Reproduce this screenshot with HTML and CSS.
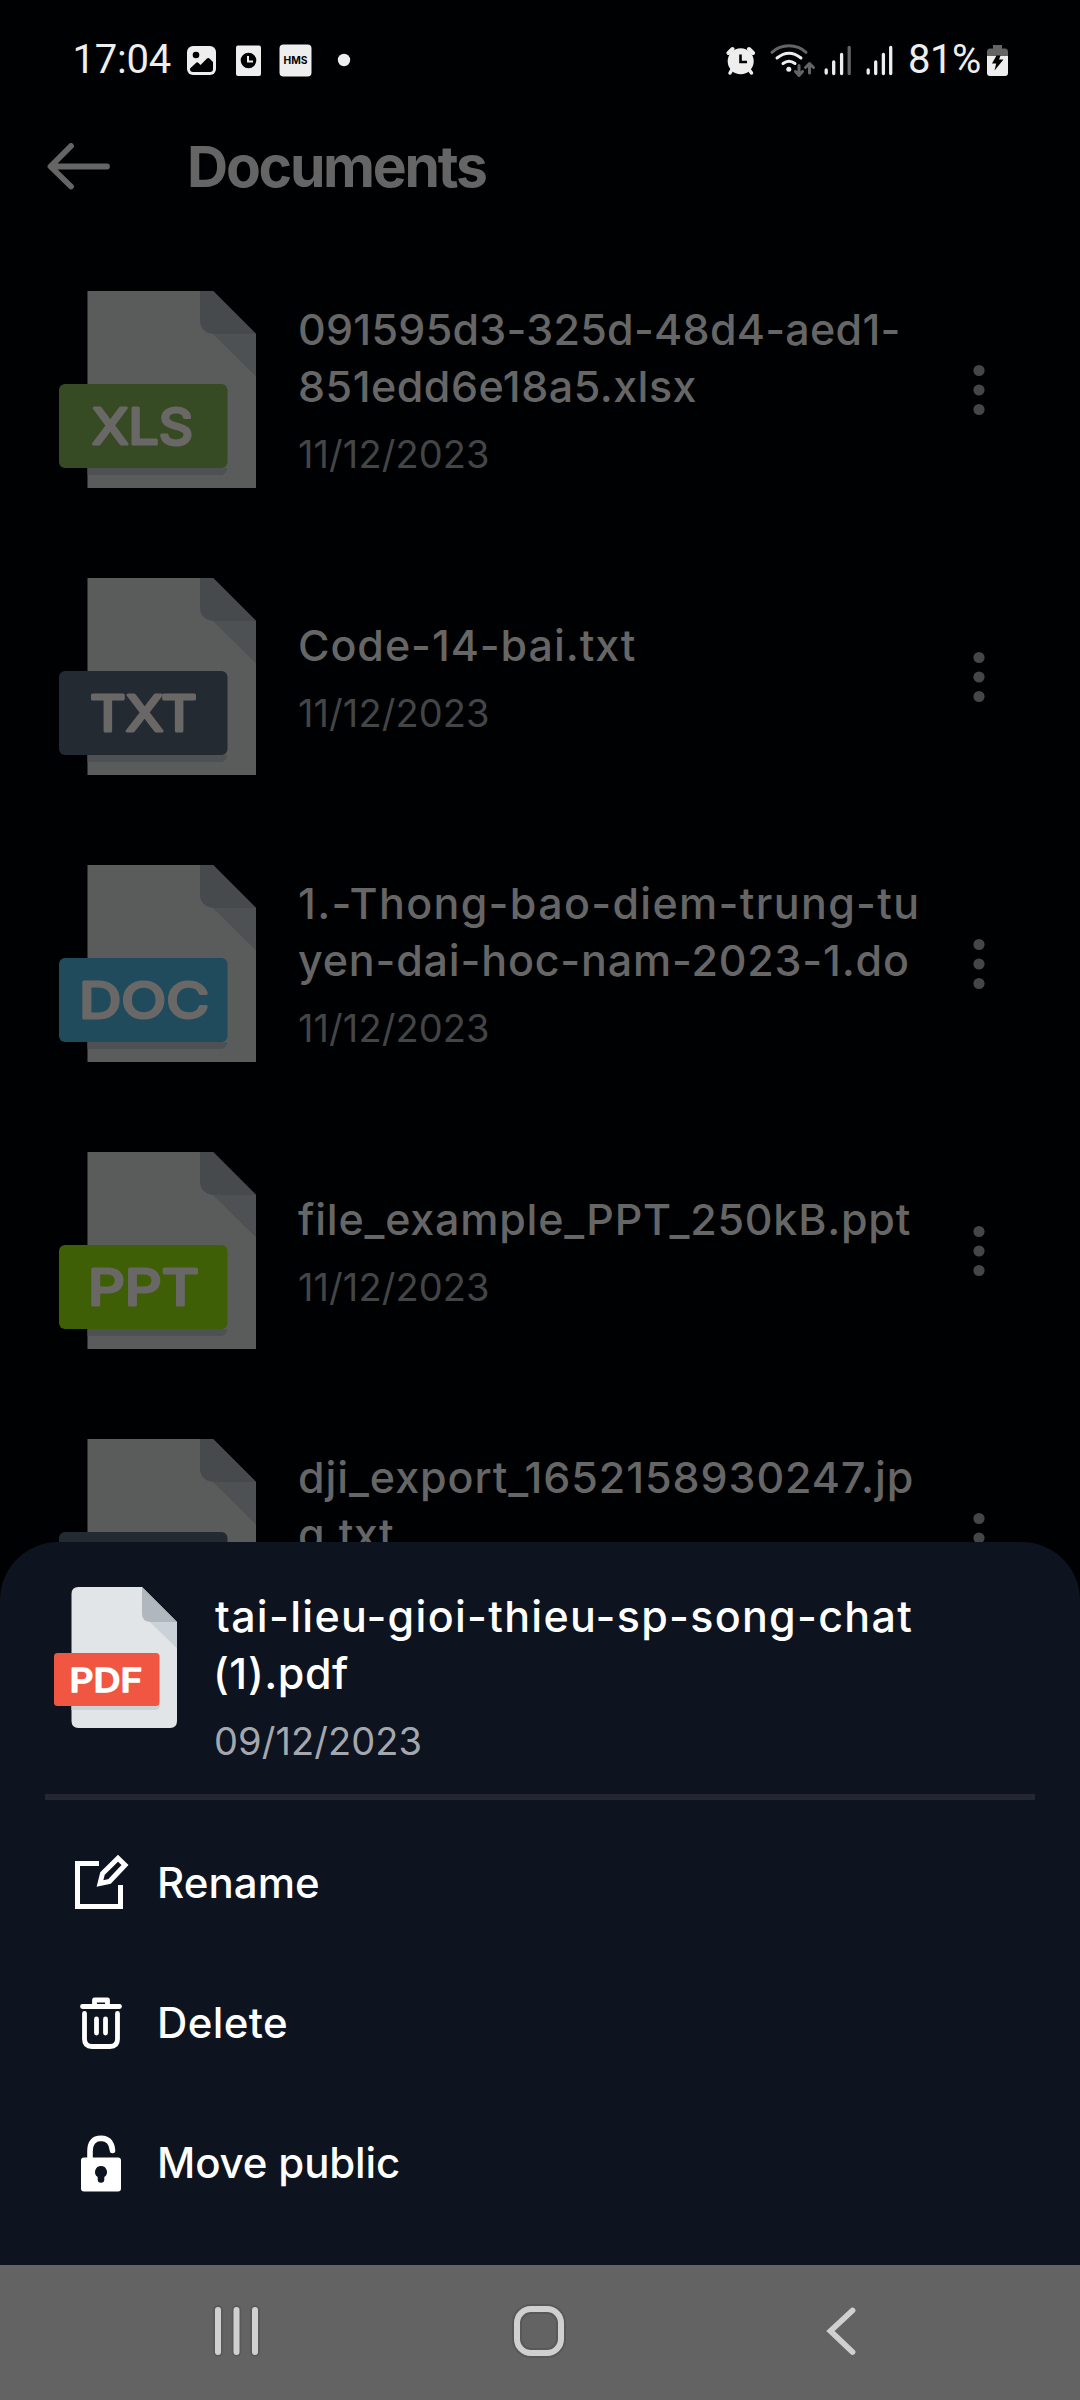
FILE: index.html
```html
<!DOCTYPE html>
<html lang="en">
<head>
<meta charset="utf-8">
<title>Documents</title>
<link rel="stylesheet" href="styles.css">
</head>
<body>
<svg class="defs" width="0" height="0" aria-hidden="true">
  <symbol id="sheet-dim" viewBox="0 0 198 198">
    <path fill="#5a5c5b" d="M28.500 0H154L197 43V197H28.500Z"/>
    <path fill="#4d5154" d="M154 43H197V85.500Z"/>
    <path fill="#464a4d" d="M141 0H154L197 43H154Q141 41 141 29Z"/>
    <path fill="#4d5154" d="M28.500 177H168V178Q167 184 161 184H28.500Z"/>
  </symbol>
  <symbol id="dots" viewBox="0 0 12 52">
    <g fill="#454647"><circle cx="6" cy="6.500" r="5.600"/><circle cx="6" cy="26" r="5.600"/><circle cx="6" cy="45.500" r="5.600"/></g>
  </symbol>
</svg>

<div class="screen">
  <header class="status">
    <span class="clock">17:04</span>
    <svg class="status-left" width="166" height="36" viewBox="0 0 166 36">
      <rect x="0" y="4" width="29" height="29" rx="6" fill="#eee"/>
      <circle cx="9" cy="13" r="3.300" fill="#000102"/>
      <path fill="#000102" d="M3 26.500L9.500 20.500Q10.500 20 11.500 21L13.500 23L20 16.500Q21.500 15.500 23 17L26 20V27Q26 30 23 30H6Q3 30 3 27Z"/>
      <rect x="49" y="3.500" width="25" height="30.500" rx="2" fill="#eee"/>
      <circle cx="61.500" cy="18.500" r="7.800" fill="#000102"/>
      <path d="M61 14V19.500H66" fill="none" stroke="#eee" stroke-width="2"/>
      <rect x="92.500" y="2.500" width="32" height="32" rx="4" fill="#eee"/>
      <text class="hms" x="96.500" y="22.200" textLength="24" lengthAdjust="spacingAndGlyphs">HMS</text>
      <circle cx="157" cy="18" r="6.200" fill="#eee"/>
    </svg>
    <svg class="status-right" width="129" height="36" viewBox="0 0 129 36">
      <g fill="none" stroke="#eee" stroke-linecap="round">
        <path stroke-width="4" d="M2.500 11L6.500 7M27 11L23 7"/>
        <path stroke-width="3.500" d="M6 27.500L4 31M23 27.500L25.500 31"/>
      </g>
      <circle cx="14.700" cy="19.300" r="13" fill="#eee"/>
      <path d="M14.500 12.500V20H21" fill="none" stroke="#000102" stroke-width="2.600"/>
      <g fill="none" stroke-width="3" stroke-linecap="round">
        <path stroke="#646464" d="M46 10.300Q53 3.800 63 3.800T80 10.300"/>
        <path stroke="#eee" d="M51 16Q63 6.500 75 16M57 21.500Q63 17 69 21.500"/>
      </g>
      <circle cx="62.800" cy="27.300" r="2.500" fill="#eee"/>
      <path d="M73 23.500V33M69.500 29.500L73 33.500L76.500 29.500M83.500 31V21.500M79.500 25.500L83.500 21.500L87.500 25.500" fill="none" stroke="#646464" stroke-width="3" stroke-linecap="round" stroke-linejoin="round"/>
      <g stroke="#eee" stroke-width="3.300" stroke-linecap="round">
        <path d="M100.200 28V31M107.700 20V31.500M115.600 12.500V31.500"/>
        <path stroke="#646464" d="M123.200 5.500V31.500"/>
      </g>
    </svg>
    <svg class="signal" width="28" height="36" viewBox="0 0 28 36">
      <path d="M2.200 28V31M9.700 20V31.500M17.400 12.500V31.500M24.700 5.500V31.500" stroke="#eee" stroke-width="3.300" stroke-linecap="round"/>
    </svg>
    <span class="percent">81%</span>
    <svg class="battery" width="21" height="36" viewBox="0 0 21 36">
      <path fill="#646464" d="M6 3H15V6.500H18Q21 6.500 21 10V16H0V10Q0 6.500 3 6.500H6Z"/>
      <path fill="#eee" d="M0 14H21V31Q21 34 18 34H3Q0 34 0 31Z"/>
      <path fill="#000102" d="M9.500 13.500H13.500L12 17.500H16.500L7.500 28.500L9.200 21.500H5Z"/>
    </svg>
  </header>

  <div class="appbar">
    <svg width="64" height="48" viewBox="0 0 64 48"><path d="M61 23.500H5M25 3L4.500 23.500L25 43.500" fill="none" stroke="#656565" stroke-width="5.800" stroke-linecap="round" stroke-linejoin="round"/></svg>
    <h1>Documents</h1>
  </div>

  <main class="list">
    <div class="row">
      <svg class="thumb" width="198" height="198" viewBox="0 0 198 198"><use href="#sheet-dim"/><rect y="93" width="168.500" height="84" rx="6" fill="#364b24"/><text class="tag" x="33" y="153" textLength="101" lengthAdjust="spacingAndGlyphs">XLS</text></svg>
      <div class="info"><div class="name ls-a">091595d3-325d-48d4-aed1-</div><div class="name ls-b">851edd6e18a5.xlsx</div><div class="date">11/12/2023</div></div>
      <svg class="more" width="12" height="52"><use href="#dots"/></svg>
    </div>
    <div class="row">
      <svg class="thumb" width="198" height="198" viewBox="0 0 198 198"><use href="#sheet-dim"/><rect y="93" width="168.500" height="84" rx="6" fill="#242a32"/><text class="tag" x="31" y="153" textLength="107" lengthAdjust="spacingAndGlyphs">TXT</text></svg>
      <div class="info"><div class="name ls-c">Code-14-bai.txt</div><div class="date">11/12/2023</div></div>
      <svg class="more" width="12" height="52"><use href="#dots"/></svg>
    </div>
    <div class="row">
      <svg class="thumb" width="198" height="198" viewBox="0 0 198 198"><use href="#sheet-dim"/><rect y="93" width="168.500" height="84" rx="6" fill="#204b5d"/><text class="tag" x="20" y="153" textLength="130" lengthAdjust="spacingAndGlyphs">DOC</text></svg>
      <div class="info"><div class="name ls-d">1.-Thong-bao-diem-trung-tu</div><div class="name ls-e">yen-dai-hoc-nam-2023-1.do</div><div class="date">11/12/2023</div></div>
      <svg class="more" width="12" height="52"><use href="#dots"/></svg>
    </div>
    <div class="row">
      <svg class="thumb" width="198" height="198" viewBox="0 0 198 198"><use href="#sheet-dim"/><rect y="93" width="168.500" height="84" rx="6" fill="#3e5f05"/><text class="tag" x="29" y="153" textLength="111" lengthAdjust="spacingAndGlyphs">PPT</text></svg>
      <div class="info"><div class="name ls-f">file_example_PPT_250kB.ppt</div><div class="date">11/12/2023</div></div>
      <svg class="more" width="12" height="52"><use href="#dots"/></svg>
    </div>
    <div class="row">
      <svg class="thumb" width="198" height="198" viewBox="0 0 198 198"><use href="#sheet-dim"/><rect y="93" width="168.500" height="84" rx="6" fill="#242a32"/></svg>
      <div class="info"><div class="name ls-g">dji_export_1652158930247.jp</div><div class="name ls-b">g.txt</div><div class="date"></div></div>
      <svg class="more" width="12" height="52"><use href="#dots"/></svg>
    </div>
  </main>

  <section class="sheet">
    <div class="file">
      <svg class="pdf" width="124" height="142" viewBox="0 0 124 142">
        <path fill="#e2e5e7" d="M24.500 0H88L123 35V134Q123 141 116 141H24.500Q17.500 141 17.500 134V7Q17.500 0 24.500 0Z"/>
        <path fill="#cad1d8" d="M96 35H123V61.500Z"/>
        <path fill="#b0b7bd" d="M88 0L123 35H96Q88 34 88 27Z"/>
        <path fill="#cad1d8" d="M17.500 119H106Q105 123 101 123H17.500Z"/>
        <rect y="66" width="105.500" height="53" rx="3.500" fill="#f15642"/>
        <text class="pdf-tag" x="15.500" y="105" textLength="73" lengthAdjust="spacingAndGlyphs">PDF</text>
      </svg>
      <div class="info"><div class="name ls-h">tai-lieu-gioi-thieu-sp-song-chat</div><div class="name ls-b par">(1).pdf</div><div class="date">09/12/2023</div></div>
    </div>
    <hr>
    <ul class="menu">
      <li>
        <svg width="56" height="60" viewBox="0 0 56 60"><path d="M24 9.500H2.500V52.500H45.500V31M27.500 19.500L43 4.300L50 11L34.500 27.500L25 29.500Z" fill="none" stroke="#fff" stroke-width="5"/></svg>
        <span class="ls-i">Rename</span>
      </li>
      <li>
        <svg width="56" height="60" viewBox="0 0 56 60"><g transform="translate(0 1)" fill="none" stroke="#fff" stroke-width="4.800" stroke-linecap="round" stroke-linejoin="round"><path d="M7.500 11.500H44.500M19.500 11V5H32.500V11M9.500 18.500V44Q9.500 51.500 17 51.500H35Q42.500 51.500 42.500 44V18.500"/><path d="M21.500 24V38M30.500 24V38"/></g></svg>
        <span class="ls-j">Delete</span>
      </li>
      <li>
        <svg width="56" height="60" viewBox="0 0 56 60"><g transform="translate(0 1.500)"><path d="M15 26V16Q15 3 26 2.800Q36.500 3 37.500 15" fill="none" stroke="#fff" stroke-width="5.600" stroke-linecap="round"/><path fill="#fff" fill-rule="evenodd" d="M9 22H43Q46 22 46 25V53Q46 56 43 56H9Q6 56 6 53V25Q6 22 9 22ZM26 30.500A6 6 0 0 0 22.700 41.500V44A3.300 3.300 0 0 0 29.300 44V41.500A6 6 0 0 0 26 30.500Z"/></g></svg>
        <span class="ls-k">Move public</span>
      </li>
    </ul>
  </section>

  <nav class="nav">
    <svg width="50" height="56" viewBox="0 0 50 56"><path d="M6 7V49M24.500 7V49M43 7V49" stroke="#585858" stroke-width="9.500" stroke-linecap="round"/><path d="M6 7V49M24.500 7V49M43 7V49" stroke="#d0d0d0" stroke-width="6" stroke-linecap="round"/></svg>
    <svg width="56" height="56" viewBox="0 0 56 56"><rect x="6" y="6" width="44" height="44" rx="14" fill="none" stroke="#585858" stroke-width="10"/><rect x="6" y="6" width="44" height="44" rx="14" fill="none" stroke="#d0d0d0" stroke-width="6"/></svg>
    <svg width="34" height="56" viewBox="0 0 34 56"><path d="M27.500 7.500L5.500 28L27.500 49" fill="none" stroke="#d0d0d0" stroke-width="5.800" stroke-linecap="round" stroke-linejoin="miter"/></svg>
  </nav>
</div>
</body>
</html>
```
FILE: styles.css
```css
* { box-sizing: border-box; }
body { margin: 0; background: #000102; font-family: Inter, "Liberation Sans", sans-serif; }
.defs { position: absolute; }
.screen { display: flex; flex-direction: column; width: 1080px; height: 2400px; overflow: hidden; background: #000102; }

/* Status bar */
.status { display: flex; flex: none; height: 120px; padding: 42px 72px 0 72.500px; font: 400 40px/36px Roboto, "Liberation Sans", sans-serif; color: #eee; }
.clock { width: 114px; letter-spacing: -0.250px; line-height: 36px; white-space: nowrap; }
.status-right { margin-left: auto; }
.signal { margin-left: 11px; }
.percent { width: 79px; margin-left: 14px; line-height: 36px; letter-spacing: -0.500px; white-space: nowrap; }
.battery { flex: none; }
.status svg { flex: none; }
.hms { font: 700 10.500px Inter, sans-serif; fill: #000102; }

/* Title bar */
.appbar { display: flex; flex: none; align-items: center; gap: 77px; height: 126px; padding: 0 46px 33px; }
h1 { margin: 0; font-size: 57px; font-weight: 700; line-height: 70px; letter-spacing: -2.260px; color: #656565; }

/* Document list */
.list { flex: none; height: 1296px; overflow: hidden; }
.row { display: flex; align-items: center; height: 287px; padding: 0 95px 0 59px; }
.thumb { flex: none; }
.tag { font: 400 49px Inter, sans-serif; fill: #6a6866; stroke: #6a6866; stroke-width: 3px; stroke-linejoin: round; }
.info { flex: 1; min-width: 0; margin-left: 41px; }
.name { height: 57px; font-size: 43px; font-weight: 500; line-height: 56px; white-space: nowrap; color: #666; }
.date { height: 48px; margin-top: 15px; font-size: 38px; line-height: 48px; letter-spacing: 0.080px; color: #434547; }

/* Bottom sheet */
.sheet { flex: none; height: 723px; padding: 45px 45px 0; background: #0d131f; border-radius: 58px 58px 0 0; }
.file { display: flex; height: 207px; padding-left: 9px; }
.pdf { flex: none; }
.pdf-tag { font: 500 32px Inter, sans-serif; fill: #fff; stroke: #fff; stroke-width: 1.500px; stroke-linejoin: round; }
.sheet .info { margin-left: 37px; padding-top: 1px; }
.sheet .name { color: #fff; }
.sheet .date { margin-top: 15px; letter-spacing: 0.080px; text-indent: -1px; color: #a4a8ae; }
hr { height: 6px; margin: 0; border: 0; background: #242633; }
.menu { display: flex; flex-direction: column; margin: 0; padding: 14px 0 0 30px; list-style: none; }
.menu li { display: flex; align-items: center; gap: 26px; height: 140px; font-size: 42px; font-weight: 500; line-height: 52px; color: #fff; }
.menu span { padding-bottom: 2px; }
.par { text-indent: -2px; }

/* Tracking per label */
.ls-a { letter-spacing: 0.260px; }
.ls-b { letter-spacing: 0.500px; }
.ls-c { letter-spacing: 0.930px; }
.ls-d { letter-spacing: 1.330px; }
.ls-e { letter-spacing: 0.820px; }
.ls-f { letter-spacing: 0.780px; }
.ls-g { letter-spacing: 0.930px; }
.ls-h { letter-spacing: 1.290px; }
.ls-i { letter-spacing: 0.050px; }
.ls-j { letter-spacing: 0.400px; }
.ls-k { letter-spacing: -0.150px; }

/* Navigation bar */
.nav { display: flex; flex: 1; align-items: flex-start; padding: 38px 0 0 212px; background: #636363; }
.nav svg:nth-child(2) { margin-left: 249px; }
.nav svg:nth-child(3) { margin-left: 258px; }
```
